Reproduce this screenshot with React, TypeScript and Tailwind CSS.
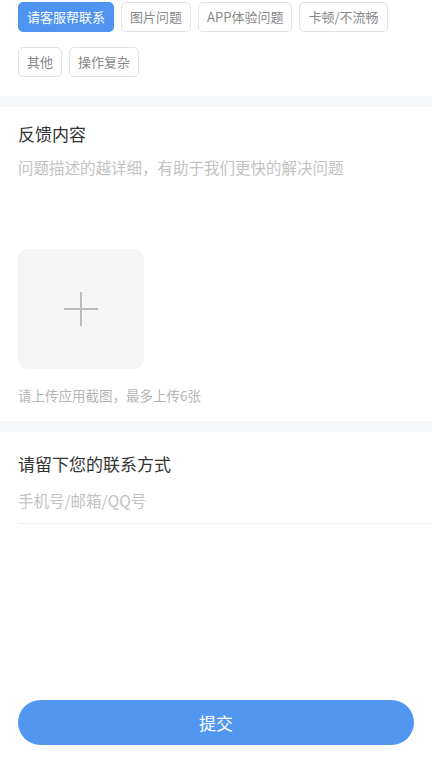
import React from 'react';

const tags = ['请客服帮联系', '图片问题', 'APP体验问题', '卡顿/不流畅', '其他', '操作复杂'];

export default function App() {
  const selected = 0;

  return (
    <div className="w-[432px] h-[768px] bg-white flex flex-col text-[#333] font-['Noto_Sans_CJK_SC','Noto_Sans',sans-serif]">
      {/* 问题类型 */}
      <div className="pt-[2px] px-[18px] pb-[19px] flex flex-wrap gap-x-[7px] gap-y-[15px]">
        {tags.map((t, i) => (
          <div
            key={t}
            className={
              i === selected
                ? 'h-[30px] px-[8px] flex items-center rounded-[5px] bg-[#4f94f0] border border-[#4f94f0] text-white text-[13px]'
                : 'h-[30px] px-[8px] flex items-center rounded-[5px] border border-[#e3e3e3] text-[#888] text-[13px]'
            }
          >
            {t}
          </div>
        ))}
      </div>

      <div className="h-[11px] bg-[#f5f6f8]" />

      {/* 反馈内容 */}
      <div className="px-[18px]">
        <div className="pt-[15px] text-[17px] leading-[24px] text-[#333]">反馈内容</div>
        <div className="mt-[11px] h-[92px] text-[15.5px] leading-[20px] text-[#c2c2c2]">问题描述的越详细，有助于我们更快的解决问题</div>
        <div className="w-[126px] h-[120px] rounded-[10px] bg-[#f5f5f5] flex items-center justify-center">
          <svg width="36" height="36" viewBox="0 0 36 36">
            <path d="M18 1V35M1 18H35" stroke="#bdbdbd" strokeWidth="2" />
          </svg>
        </div>
        <div className="mt-[17px] pb-[17px] text-[13.5px] leading-[18px] text-[#b5b5b5]">请上传应用截图，最多上传6张</div>
      </div>

      <div className="h-[11px] bg-[#f5f6f8]" />

      {/* 联系方式 */}
      <div className="pl-[18px]">
        <div className="pt-[20px] text-[17px] leading-[24px] text-[#333]">请留下您的联系方式</div>
        <div className="mt-[14px] pb-[13px] border-b border-[#f0f0f0] text-[15.5px] leading-[20px] text-[#c2c2c2]">手机号/邮箱/QQ号</div>
      </div>

      <div className="flex-1" />

      <div className="px-[18px] pb-[23px]">
        <button className="w-full h-[45px] rounded-full bg-[#5197f2] text-white text-[17px]">提交</button>
      </div>
    </div>
  );
}
